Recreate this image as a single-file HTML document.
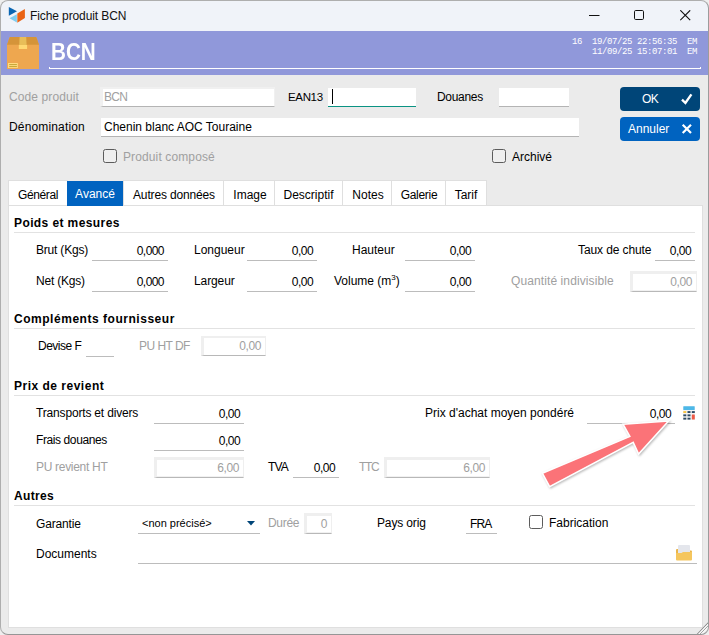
<!DOCTYPE html>
<html lang="fr"><head><meta charset="utf-8"><title>Fiche produit BCN</title>
<style>
*{box-sizing:border-box;margin:0;padding:0}
html,body{width:709px;height:635px;overflow:hidden;background:#eee}
body{font-family:"Liberation Sans",sans-serif;font-size:12px;color:#000;position:relative}
.win{position:absolute;left:0;top:0;width:709px;height:635px;border-radius:8px;background:#ebebeb;overflow:hidden}
.bd{position:absolute;left:0;top:0;width:709px;height:635px;border-radius:8px;border:1px solid #aeaeae;border-right-color:#9c9c9c;border-bottom-color:#969696;pointer-events:none}
.tb{position:absolute;left:0;top:0;width:709px;height:31px;background:#f0f3f9}
.tb .t{position:absolute;left:30px;top:9px;font-size:12px;color:#111;letter-spacing:-0.1px;white-space:nowrap}
.hd{position:absolute;left:0;top:31px;width:709px;height:44px;background:#9098da}
.hd .n{position:absolute;left:51px;top:6.5px;font-size:24px;line-height:28px;font-weight:bold;color:#fff;white-space:nowrap;transform:scaleX(0.86);transform-origin:0 0}
.hd .ul{position:absolute;left:49px;top:37px;width:651px;height:1px;background:#fff}
.hd .m{position:absolute;right:12px;font-family:"Liberation Mono",monospace;font-size:9px;line-height:10px;letter-spacing:-0.4px;color:#fff;white-space:pre}
.a{position:absolute;white-space:nowrap}
.lb{position:absolute;white-space:nowrap;font-size:12px;line-height:14px}
.g{color:#a0a0a0}
.in{position:absolute;background:#fff;border-bottom:1px solid #b4b4b4;height:19px;font-size:12px;line-height:17px;padding:1px 0 0 3px;white-space:nowrap}
.in.dis{height:20px;border-left:3px solid #f0f0f0;border-top:2px solid #f0f0f0;border-right:1px solid #f0f0f0;padding:0 0 0 1px;letter-spacing:-0.7px}
.btn{position:absolute;left:620px;width:80px;height:24px;border-radius:4px;color:#fff;font-size:12px;line-height:25px}
.cb{position:absolute;width:14px;height:14px;border:1px solid #5c5c5c;border-radius:2.5px;background:#efefef}
.tab{position:absolute;top:180px;height:25px;background:#fff;border:1px solid #dfdfdf;border-bottom:none;font-size:12px;line-height:26px;padding-top:1px;text-align:center;white-space:nowrap}
.tab.s{background:#0063c0;color:#fff;border:none;top:181px;height:25px;padding-top:0;line-height:27px}
.pn{position:absolute;left:8px;top:205px;width:695px;height:423px;background:#fff;border:1px solid #dfdfdf}
.h{position:absolute;left:14px;transform:translateY(0.5px);font-weight:bold;font-size:12px;line-height:14px;white-space:nowrap;letter-spacing:0.4px}
.hl{position:absolute;left:14px;width:681px;height:1px;background:#e2e2e2}
.u{position:absolute;border-bottom:1px solid #bcbcbc;height:20px;font-size:12px;line-height:17px;text-align:right;padding:2px 4px 0 0;white-space:nowrap;letter-spacing:-0.55px}
.d{position:absolute;border-left:3px solid #efefef;border-top:3px solid #efefef;border-right:1px solid #efefef;border-bottom:1px solid #b8b8b8;box-shadow:inset 0 -1px 0 #f1f1f1;height:21px;font-size:12px;line-height:17px;text-align:right;padding-right:4px;color:#a0a0a0;white-space:nowrap;letter-spacing:-0.4px}
</style></head><body>
<div class="win">
 <div class="tb">
  <svg class="a" style="left:8px;top:6px" width="18" height="18" viewBox="8 6 18 18"><polygon points="8.8,6.9 17,11.3 8.8,15.8" fill="#0a66b3"/><polygon points="9.5,18.3 16.9,14.2 16.9,22.4" fill="#7fcdf0"/><polygon points="17.3,13.6 24.9,9.1 24.9,18 17.3,22.7" fill="#ea6416"/></svg>
  <div class="t">Fiche produit BCN</div>
  <svg class="a" style="left:588px;top:9px" width="13" height="13"><path d="M1 6.5H11.5" stroke="#111" stroke-width="1" fill="none"/></svg>
  <svg class="a" style="left:634px;top:10px" width="11" height="11"><rect x="0.5" y="0.5" width="9" height="9" rx="1.2" stroke="#111" stroke-width="1" fill="none"/></svg>
  <svg class="a" style="left:680px;top:10px" width="11" height="11"><path d="M0.3 0.3L10.2 10.2M10.2 0.3L0.3 10.2" stroke="#111" stroke-width="1.15" fill="none"/></svg>
 </div>
 <div class="hd">
  <svg class="a" style="left:7px;top:6px" width="32" height="32" viewBox="0 0 32 32"><path d="M0 7.7L2.8 0H29.2L32 7.7V32H0Z" fill="#eea74f"/><path d="M0 7.7L2.8 0H29.2L32 7.7Z" fill="#d59439"/><path d="M12.6 0H19.2L19.6 8H12.2Z" fill="#e8bd58"/><rect x="11.8" y="8" width="8.3" height="4" fill="#ffd873"/><rect x="1" y="26" width="9.8" height="5" fill="#ffdc82"/><rect x="2.2" y="27" width="7.7" height="1.1" fill="#c9a83a"/><rect x="2.2" y="29" width="7.7" height="1.1" fill="#c9a83a"/></svg>
  <div class="n">BCN</div>
  <div class="ul"></div><div class="a" style="left:49px;top:36px;width:1px;height:2px;background:#fff"></div><div class="a" style="left:700px;top:36px;width:1px;height:2px;background:#fff"></div>
  <div class="m" style="top:6px">16  19/07/25 22:56:35  EM</div>
  <div class="m" style="top:16px">11/09/25 15:07:01  EM</div>
 </div>

 <div class="lb g" style="left:9px;top:90px;letter-spacing:0.1px">Code produit</div>
 <div class="in dis g" style="left:100px;top:87px;width:175px">BCN</div>
 <div class="lb" style="left:288px;top:90px;font-size:11.5px;letter-spacing:-0.35px">EAN13</div>
 <div class="in" style="left:328px;top:88px;width:88px;border-bottom:1px solid #0a9383"><span style="display:inline-block;width:1px;height:15px;background:#000;vertical-align:-3px;margin-left:1px"></span></div>
 <div class="lb" style="left:437px;top:90px;letter-spacing:-0.3px">Douanes</div>
 <div class="in" style="left:499px;top:88px;width:70px"></div>
 <div class="btn" style="top:87px;background:#004578"><span class="a" style="left:22px;letter-spacing:-0.6px">OK</span><svg class="a" style="left:60px;top:5.2px" width="14" height="13"><path d="M2 7.7L5.4 11L11.4 2.4" stroke="#fff" stroke-width="2.4" fill="none"/></svg></div>
 <div class="btn" style="top:117px;background:#0063c0"><span class="a" style="left:8px">Annuler</span><svg class="a" style="left:60.7px;top:6.2px" width="12" height="12"><path d="M1.7 1.7L10 10M10 1.7L1.7 10" stroke="#fff" stroke-width="2.2" fill="none"/></svg></div>
 <div class="lb" style="left:9px;top:120px;letter-spacing:0.15px">Dénomination</div>
 <div class="in" style="left:101px;top:118px;width:478px">Chenin blanc AOC Touraine</div>
 <div class="cb" style="left:103px;top:149px"></div>
 <div class="lb g" style="left:123px;top:150px;letter-spacing:0.12px">Produit composé</div>
 <div class="cb" style="left:492px;top:149px"></div>
 <div class="lb" style="left:512px;top:150px">Archivé</div>

 <div class="pn"></div>
 <div class="tab" style="left:8px;width:60px;letter-spacing:-0.4px">Général</div>
 <div class="tab s" style="left:67px;width:56px">Avancé</div>
 <div class="tab" style="left:123px;width:101px;letter-spacing:-0.15px;padding-left:1px">Autres données</div>
 <div class="tab" style="left:223px;width:52px;padding-left:2px">Image</div>
 <div class="tab" style="left:274px;width:69px">Descriptif</div>
 <div class="tab" style="left:342px;width:50px;padding-left:2px">Notes</div>
 <div class="tab" style="left:391px;width:55px;letter-spacing:-0.3px;padding-left:1px">Galerie</div>
 <div class="tab" style="left:445px;width:42px">Tarif</div>

 <div class="h" style="top:215px">Poids et mesures</div><div class="hl" style="top:232px"></div>
 <div class="lb" style="left:36px;top:243px;letter-spacing:-0.2px">Brut (Kgs)</div><div class="u" style="left:92px;top:241px;width:76px">0,000</div>
 <div class="lb" style="left:194px;top:243px">Longueur</div><div class="u" style="left:247px;top:241px;width:70px">0,00</div>
 <div class="lb" style="left:352px;top:243px">Hauteur</div><div class="u" style="left:405px;top:241px;width:70px">0,00</div>
 <div class="lb" style="left:578px;top:243px;letter-spacing:-0.1px">Taux de chute</div><div class="u" style="left:655px;top:241px;width:40px">0,00</div>
 <div class="lb" style="left:36px;top:274px;letter-spacing:-0.2px">Net (Kgs)</div><div class="u" style="left:92px;top:272px;width:76px">0,000</div>
 <div class="lb" style="left:194px;top:274px;letter-spacing:-0.1px">Largeur</div><div class="u" style="left:247px;top:272px;width:70px">0,00</div>
 <div class="lb" style="left:334px;top:274px">Volume (m<sup style="font-size:8px;line-height:0;vertical-align:5px">3</sup>)</div><div class="u" style="left:405px;top:272px;width:70px">0,00</div>
 <div class="lb g" style="left:511px;top:274px;letter-spacing:0.1px">Quantité indivisible</div><div class="d" style="left:630px;top:271px;width:67px">0,00</div>

 <div class="h" style="top:311px;letter-spacing:0.53px">Compléments fournisseur</div><div class="hl" style="top:328px"></div>
 <div class="lb" style="left:38px;top:339px;letter-spacing:-0.5px">Devise F</div><div class="u" style="left:86px;top:337px;width:28px"></div>
 <div class="lb g" style="left:139px;top:339px;letter-spacing:-0.54px">PU HT DF</div><div class="d" style="left:201px;top:336px;width:65px;height:20px;border-top-width:2px;box-shadow:none">0,00</div>

 <div class="h" style="top:378px;letter-spacing:0.5px">Prix de revient</div><div class="hl" style="top:395px"></div>
 <div class="lb" style="left:36px;top:406px;letter-spacing:-0.17px">Transports et divers</div><div class="u" style="left:154px;top:404px;width:90px">0,00</div>
 <div class="lb" style="left:425px;top:406px">Prix d'achat moyen pondéré</div><div class="u" style="left:587px;top:404px;width:88px">0,00</div>
 <svg class="a" style="left:683px;top:406px" width="12" height="14" viewBox="0 0 12 14"><rect width="12" height="14" fill="#f4f4f4"/><rect x="0.3" y="0.3" width="11.4" height="3.7" rx="0.5" fill="#4db8e8"/><rect x="0.3" y="5.1" width="3" height="1.9" fill="#f9c440"/><g fill="#2d4a63"><rect x="4.5" y="5.1" width="3" height="1.9"/><rect x="8.8" y="5.1" width="3" height="1.9"/><rect x="0.3" y="8.4" width="3" height="1.9"/><rect x="4.5" y="8.4" width="3" height="1.9"/><rect x="0.3" y="11.7" width="3" height="1.9"/><rect x="4.5" y="11.7" width="3" height="1.9"/></g><rect x="8.8" y="8.4" width="3" height="5.2" rx="0.5" fill="#ee5a46"/></svg>
 <div class="lb" style="left:36px;top:433px;letter-spacing:-0.4px">Frais douanes</div><div class="u" style="left:154px;top:431px;width:90px">0,00</div>
 <div class="lb g" style="left:36px;top:460px;letter-spacing:-0.3px">PU revient HT</div><div class="d" style="left:154px;top:457px;width:90px">6,00</div>
 <div class="lb" style="left:268px;top:460px;letter-spacing:-0.8px">TVA</div><div class="u" style="left:293px;top:458px;width:46px">0,00</div>
 <div class="lb g" style="left:359px;top:460px;letter-spacing:-1.3px">TTC</div><div class="d" style="left:384px;top:457px;width:106px">6,00</div>

 <div class="h" style="top:488px;letter-spacing:0.35px">Autres</div><div class="hl" style="top:505px"></div>
 <div class="lb" style="left:36px;top:517px;letter-spacing:-0.15px">Garantie</div>
 <div class="u" style="left:138px;top:514px;width:122px;text-align:left;padding:1px 0 0 4px;font-size:11px;letter-spacing:0">&lt;non précisé&gt;</div>
 <svg class="a" style="left:247px;top:521px" width="9" height="5"><polygon points="0,0 8,0 4,4.5" fill="#004578"/></svg>
 <div class="lb g" style="left:268px;top:516px;letter-spacing:-0.3px">Durée</div><div class="d" style="left:304px;top:513px;width:28px">0</div>
 <div class="lb" style="left:377px;top:516px;letter-spacing:-0.15px">Pays orig</div><div class="u" style="left:466px;top:514px;width:31px;text-align:left;padding-left:4px;letter-spacing:-0.9px">FRA</div>
 <div class="cb" style="left:529px;top:515px;background:#fff"></div>
 <div class="lb" style="left:549px;top:516px">Fabrication</div>
 <div class="lb" style="left:36px;top:547px">Documents</div><div class="u" style="left:138px;top:544px;width:559px"></div>
 <svg class="a" style="left:676px;top:545px" width="16" height="16" viewBox="0 0 16 16"><path d="M0 5Q0 4 1 4H2.5V9H0Z" fill="#eab54a"/><path d="M13.5 5.5H15Q16 5.5 16 6.5V9H13.5Z" fill="#eab54a"/><path d="M2 1Q2 0 3 0H13Q14 0 14 1V9H2Z" fill="#e4e6ec"/><path d="M0 8H5.5L7 7H16V14.5Q16 15.5 15 15.5H1Q0 15.5 0 14.5Z" fill="#f5c65e"/></svg>

 <svg class="a" style="left:535px;top:414px;filter:drop-shadow(1px 1.5px 1.2px rgba(0,0,0,0.28))" width="140" height="80" viewBox="535 414 140 80"><polygon points="668.6,421.0 623.0,424.1 629.8,436.4 542.3,473.2 549.6,486.6 633.2,442.4 638.6,454.0" fill="#fb7378" stroke="#fff" stroke-width="1.6" stroke-linejoin="miter"/></svg>
 <svg class="a" style="left:695px;top:621px" width="14" height="14" viewBox="0 0 14 14"><path d="M1.9 13.6L13.6 1.4M4.5 13.6L13.6 4.3" stroke="#8c8c8c" stroke-width="1.1"/><path d="M3.2 13.6L13.6 2.85M5.8 13.6L13.6 5.7" stroke="#fff" stroke-width="1.1"/></svg>
</div>
<div class="bd"></div>
</body></html>
